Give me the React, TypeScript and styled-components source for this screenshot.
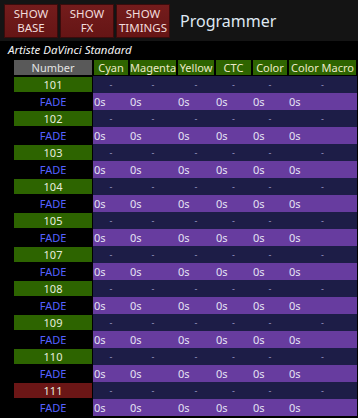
import React from "react";
import styled, {createGlobalStyle} from "styled-components";

const GlobalStyle = createGlobalStyle`
  html, body {
    margin: 0;
    padding: 0;
    background: #000;
  }
  body {
    font-family: "Noto Sans", "Open Sans", sans-serif;
    width: 358px;
    height: 418px;
    overflow: hidden;
  }
`;

type Column = { name: string; width: number; };
type Channel = { num: string; selected?: boolean; };

const columns: Column[] = [
  {name: "Cyan", width: 36},
  {name: "Magenta", width: 48},
  {name: "Yellow", width: 38},
  {name: "CTC", width: 37},
  {name: "Color", width: 36},
  {name: "Color Macro", width: 69},
];

const channels: Channel[] = [
  {num: "101"}, {num: "102"}, {num: "103"}, {num: "104"}, {num: "105"},
  {num: "107"}, {num: "108"}, {num: "109"}, {num: "110"}, {num: "111", selected: true},
];

const gridColumns = `80px ${columns.map(c => c.width + "px").join(" ")}`;

const TopBar = styled.div`
  display: flex;
  align-items: center;
  gap: 2px;
  height: 41px;
  padding: 0 4px;
  box-sizing: border-box;
  background: #141414;
`;

const ShowButton = styled.button`
  width: 54px;
  height: 34px;
  padding: 0;
  border: 1px solid #3a0c0c;
  background: linear-gradient(#741c1c, #651515);
  color: #f1dcdc;
  font-family: inherit;
  font-size: 11.5px;
  line-height: 14px;
  text-align: center;
`;

const Title = styled.div`
  margin-left: 8px;
  color: #dfe8f2;
  font-size: 16px;
  line-height: 20px;
`;

const FixtureName = styled.div`
  height: 18px;
  padding-left: 8px;
  color: #f2f2f2;
  font-style: italic;
  font-size: 11.5px;
  line-height: 18px;
`;

const Table = styled.div`
  padding-left: 13px;
  font-size: 11px;
`;

const Row = styled.div`
  display: grid;
  grid-template-columns: ${gridColumns};
  height: 17px;
`;

const HeaderCell = styled.div<{ $number?: boolean }>`
  margin: 1px;
  background: ${p => p.$number ? "#595959" : "#2e6400"};
  color: ${p => p.$number ? "#e4e4e4" : "#ece9c8"};
  line-height: 15px;
  text-align: center;
  white-space: nowrap;
  overflow: hidden;
`;

const NumberCell = styled.div<{ $selected?: boolean }>`
  margin: 1px;
  background: ${p => p.$selected ? "#6b1616" : "#2d6400"};
  color: #e6ecdc;
  line-height: 15px;
  text-align: center;
`;

const FadeLabel = styled.div`
  color: #5560ff;
  line-height: 17px;
  text-align: center;
`;

const ValueCell = styled.div<{ $fade?: boolean }>`
  background: ${p => p.$fade ? "#673c9f" : "#1d1d47"};
  color: ${p => p.$fade ? "#e4e2f4" : "#9a9ac4"};
  font-size: ${p => p.$fade ? "11px" : "9px"};
  line-height: 17px;
  text-align: ${p => p.$fade ? "left" : "center"};
  padding-left: ${p => p.$fade ? "1px" : "0"};
`;

export default function App() {
  return (
    <>
      <GlobalStyle/>
      <TopBar>
        <ShowButton>SHOW<br/>BASE</ShowButton>
        <ShowButton>SHOW<br/>FX</ShowButton>
        <ShowButton>SHOW<br/>TIMINGS</ShowButton>
        <Title>Programmer</Title>
      </TopBar>
      <FixtureName>Artiste DaVinci Standard</FixtureName>
      <Table>
        <Row>
          <HeaderCell $number>Number</HeaderCell>
          {columns.map(c => <HeaderCell key={c.name}>{c.name}</HeaderCell>)}
        </Row>
        {channels.map(ch => (
          <React.Fragment key={ch.num}>
            <Row>
              <NumberCell $selected={ch.selected}>{ch.num}</NumberCell>
              {columns.map(c => <ValueCell key={c.name}>-</ValueCell>)}
            </Row>
            <Row>
              <FadeLabel>FADE</FadeLabel>
              {columns.map(c => <ValueCell key={c.name} $fade>0s</ValueCell>)}
            </Row>
          </React.Fragment>
        ))}
      </Table>
    </>
  );
}
